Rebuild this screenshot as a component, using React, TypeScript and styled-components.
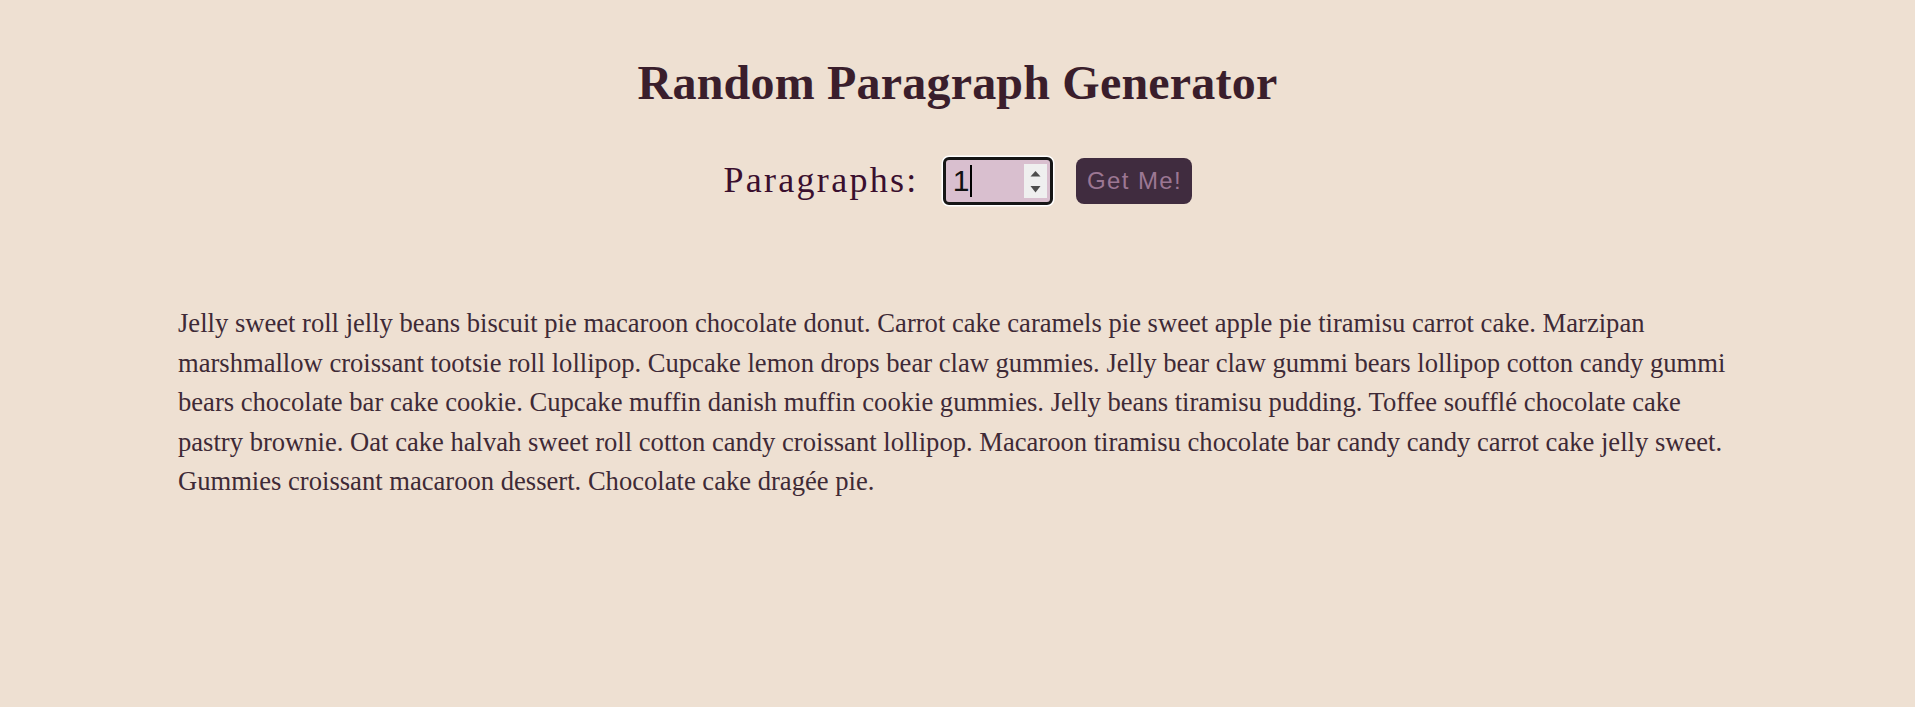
import React from "react";
import styled, { createGlobalStyle } from "styled-components";

const GlobalStyle = createGlobalStyle`
  html, body {
    margin: 0;
    padding: 0;
    background: #eee0d2;
  }
  body {
    font-family: "Liberation Serif", "Times New Roman", serif;
  }
`;

const Page = styled.main`
  min-height: 707px;
  box-sizing: border-box;
  padding-top: 55px;
  background: #eee0d2;
`;

const Title = styled.h1`
  margin: 0;
  text-align: center;
  font-family: "Liberation Serif", "Times New Roman", serif;
  font-weight: 700;
  font-size: 48px;
  letter-spacing: 0.2px;
  line-height: normal;
  color: #3a1e2c;
`;

const Controls = styled.div`
  display: flex;
  justify-content: center;
  align-items: center;
  margin-top: 47px;
  height: 48px;
`;

const Label = styled.label`
  font-family: "Liberation Serif", "Times New Roman", serif;
  font-size: 36px;
  letter-spacing: 2.3px;
  line-height: normal;
  color: #3a0f2e;
  padding-bottom: 2px;
  margin-right: 24px;
`;

const NumberField = styled.div`
  box-sizing: border-box;
  width: 110px;
  height: 48px;
  display: flex;
  align-items: center;
  padding: 0 3px 0 7px;
  background: #d9bfcf;
  border: 3px solid #161616;
  border-radius: 6px;
  box-shadow: 0 0 0 1.5px #ffffff;
  margin-right: 23px;
`;

const Value = styled.span`
  font-family: "Liberation Sans", Arial, sans-serif;
  font-size: 30px;
  line-height: 1;
  color: #111;
`;

const Caret = styled.span`
  display: inline-block;
  width: 2px;
  height: 32px;
  background: #000;
  margin-left: 1px;
`;

const Spinner = styled.svg`
  margin-left: auto;
  display: block;
`;

const Button = styled.button`
  box-sizing: border-box;
  width: 116px;
  height: 46px;
  padding: 0 0 0 2px;
  border: none;
  border-radius: 8px;
  background: #402c3f;
  color: #9c7793;
  font-family: "Liberation Sans", Arial, sans-serif;
  font-size: 24px;
  letter-spacing: 1.4px;
  cursor: pointer;
`;

const Text = styled.p`
  margin: 99px 0 0;
  padding: 0 178px;
  font-family: "Liberation Serif", "Times New Roman", serif;
  font-size: 26.6px;
  line-height: 39.5px;
  color: #3e2a36;
`;

const paragraph =
  "Jelly sweet roll jelly beans biscuit pie macaroon chocolate donut. Carrot cake caramels pie sweet apple pie tiramisu carrot cake. Marzipan marshmallow croissant tootsie roll lollipop. Cupcake lemon drops bear claw gummies. Jelly bear claw gummi bears lollipop cotton candy gummi bears chocolate bar cake cookie. Cupcake muffin danish muffin cookie gummies. Jelly beans tiramisu pudding. Toffee soufflé chocolate cake pastry brownie. Oat cake halvah sweet roll cotton candy croissant lollipop. Macaroon tiramisu chocolate bar candy candy carrot cake jelly sweet. Gummies croissant macaroon dessert. Chocolate cake dragée pie.";

export default function App() {
  return (
    <>
      <GlobalStyle />
      <Page>
        <Title>Random Paragraph Generator</Title>
        <Controls>
          <Label>Paragraphs:</Label>
          <NumberField>
            <Value>1</Value>
            <Caret />
            <Spinner width="23" height="34" viewBox="0 0 23 34">
              <rect x="0" y="0" width="23" height="34" fill="#efefef" />
              <polygon points="6.5,12.5 16.5,12.5 11.5,7" fill="#4d4d4d" />
              <polygon points="6.5,22 16.5,22 11.5,28.5" fill="#4d4d4d" />
            </Spinner>
          </NumberField>
          <Button>Get Me!</Button>
        </Controls>
        <Text>{paragraph}</Text>
      </Page>
    </>
  );
}
